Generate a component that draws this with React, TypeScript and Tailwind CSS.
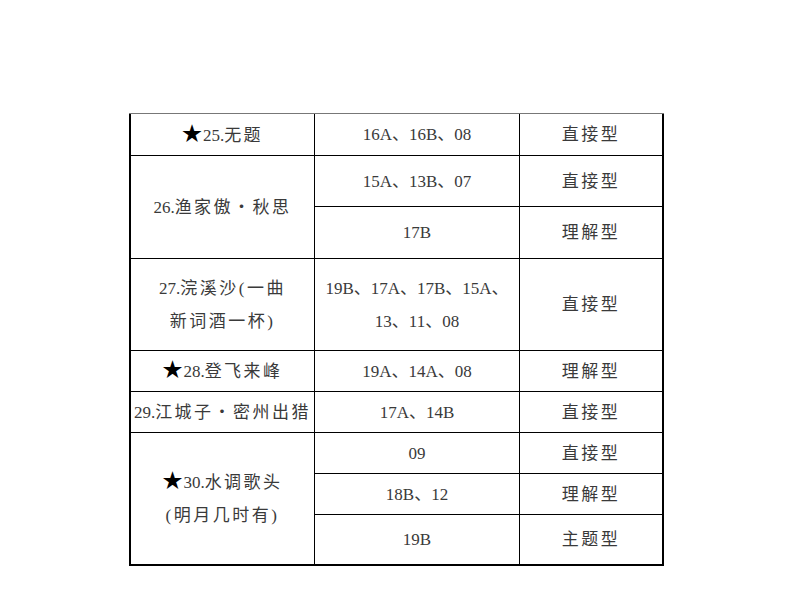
const Cn = ({ children }: { children: React.ReactNode }) => (
  <span className="tracking-[2.5px]">{children}</span>
);

const Star = () => <span className="mr-px text-[20px] text-black">★</span>;

const Cell = ({
  children,
  className = "",
}: {
  children: React.ReactNode;
  className?: string;
}) => (
  <div
    className={`bg-white flex flex-col items-center justify-center text-center leading-[33px] ${className}`}
  >
    {children}
  </div>
);

export default function App() {
  return (
    <div
      className="min-h-[596px] w-[794px] bg-white pl-[129px] pt-[113px] text-[17px] text-[#3a3a3a]"
      style={{ fontFamily: '"Liberation Serif", "Noto Sans CJK SC", serif' }}
    >
      <div className="grid w-[535px] grid-cols-[183px_204px_142px] grid-rows-[41px_50px_51px_91px_40px_40px_40px_40px_49px] gap-px border-t border-[#777] bg-black px-[2px] pb-[2px]">
        {/* 25 */}
        <Cell>
          <span>
            <Star />25.<Cn>无题</Cn>
          </span>
        </Cell>
        <Cell>16A、16B、08</Cell>
        <Cell>
          <Cn>直接型</Cn>
        </Cell>

        {/* 26 */}
        <Cell className="row-span-2">
          <span>
            26.<Cn>渔家傲・秋思</Cn>
          </span>
        </Cell>
        <Cell>15A、13B、07</Cell>
        <Cell>
          <Cn>直接型</Cn>
        </Cell>
        <Cell>17B</Cell>
        <Cell>
          <Cn>理解型</Cn>
        </Cell>

        {/* 27 */}
        <Cell>
          <span>
            27.<Cn>浣溪沙(一曲</Cn>
          </span>
          <span>
            <Cn>新词酒一杯)</Cn>
          </span>
        </Cell>
        <Cell>
          <span>19B、17A、17B、15A、</span>
          <span>13、11、08</span>
        </Cell>
        <Cell>
          <Cn>直接型</Cn>
        </Cell>

        {/* 28 */}
        <Cell>
          <span>
            <Star />28.<Cn>登飞来峰</Cn>
          </span>
        </Cell>
        <Cell>19A、14A、08</Cell>
        <Cell>
          <Cn>理解型</Cn>
        </Cell>

        {/* 29 */}
        <Cell>
          <span className="whitespace-nowrap">
            29.<Cn>江城子・密州出猎</Cn>
          </span>
        </Cell>
        <Cell>17A、14B</Cell>
        <Cell>
          <Cn>直接型</Cn>
        </Cell>

        {/* 30 */}
        <Cell className="row-span-3">
          <span>
            <Star />30.<Cn>水调歌头</Cn>
          </span>
          <span>
            <Cn>(明月几时有)</Cn>
          </span>
        </Cell>
        <Cell>09</Cell>
        <Cell>
          <Cn>直接型</Cn>
        </Cell>
        <Cell>18B、12</Cell>
        <Cell>
          <Cn>理解型</Cn>
        </Cell>
        <Cell>19B</Cell>
        <Cell>
          <Cn>主题型</Cn>
        </Cell>
      </div>
    </div>
  );
}
